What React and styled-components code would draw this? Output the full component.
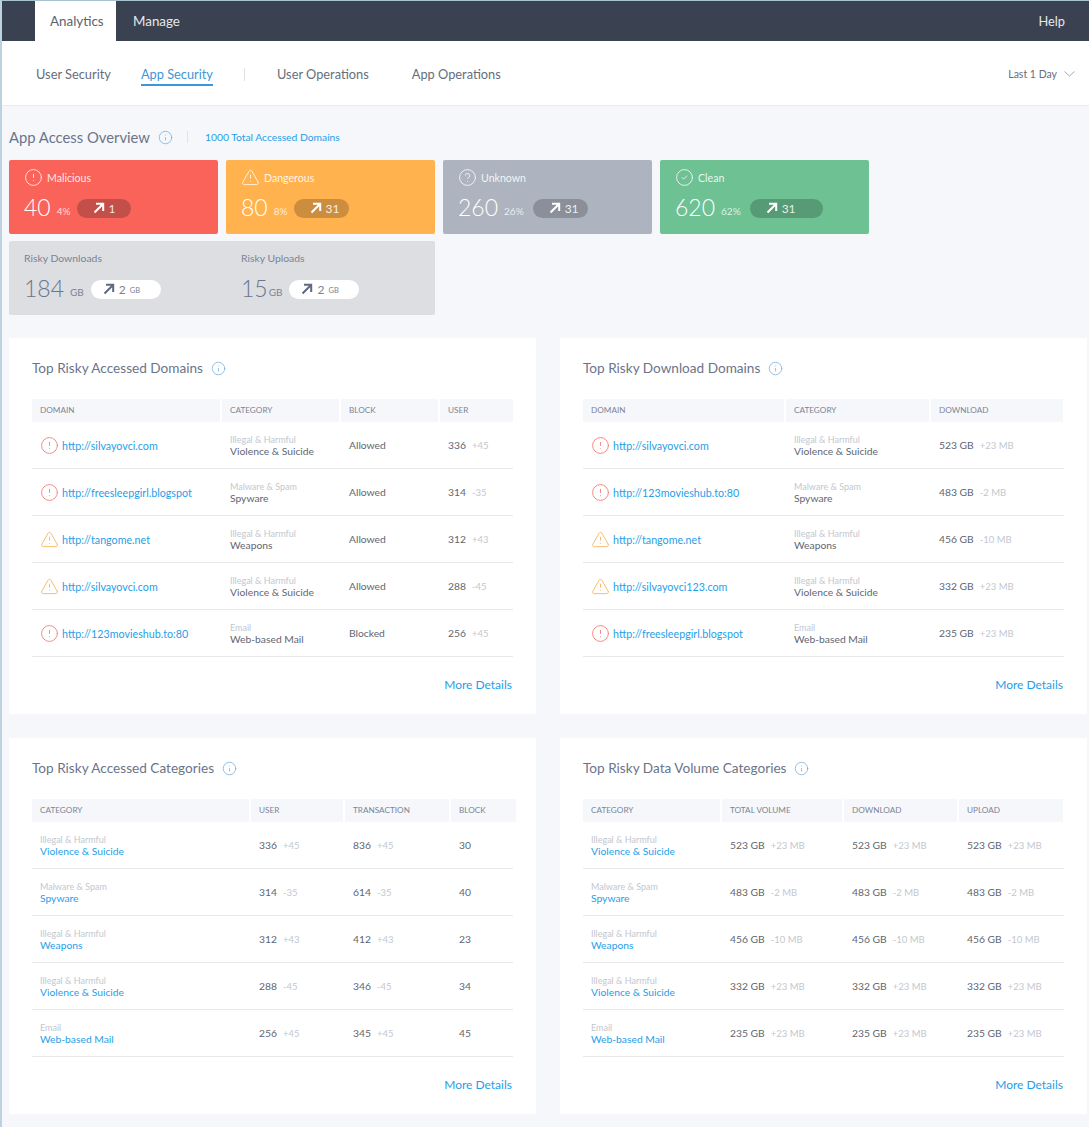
import React from "react";
import styled, { createGlobalStyle } from "styled-components";
import { AlertCircle, AlertTriangle, HelpCircle, CheckCircle2, Info } from "lucide-react";

const Global = createGlobalStyle`
  html, body { margin: 0; padding: 0; background: #f5f7fb; }
  body { font-family: "Lato", "Noto Sans", sans-serif; color: #5f6672; }
  * { box-sizing: border-box; }
`;

const Page = styled.div`
  border-left: 2px solid #bcd3df;
  border-top: 1px solid #a9c2d0;
  background: #f5f7fb;
  height: 1127px;
  overflow: hidden;
`;
const TopBar = styled.header`
  height: 40px;
  background: #3a4150;
  display: flex;
  align-items: stretch;
  padding: 0 24px 0 33px;
  font-size: 13.4px;
  color: #e6e8ec;
`;
const TopTab = styled.div`
  width: ${p => p.$w}px;
  padding-left: ${p => p.$pad}px;
  display: flex;
  align-items: center;
  background: ${p => (p.$active ? "#fff" : "transparent")};
  color: ${p => (p.$active ? "#5a6270" : "#e6e8ec")};
`;
const Help = styled.div`
  margin-left: auto;
  display: flex;
  align-items: center;
  font-size: 12.8px;
`;
const SubNav = styled.nav`
  height: 65px;
  background: #fff;
  border-bottom: 1px solid #e9ebf0;
  display: flex;
  align-items: center;
  padding: 2px 14px 0 34px;
  font-size: 12.8px;
  color: #666e7d;
`;
const SubItem = styled.div`
  margin-right: ${p => p.$mr}px;
  padding: 4px 0 2px;
  border-bottom: 2px solid ${p => (p.$active ? "#3d96d8" : "transparent")};
  color: ${p => (p.$active ? "#3d96d8" : "#666e7d")};
  white-space: nowrap;
`;
const SubDivider = styled.div`
  width: 1px;
  height: 13px;
  background: #dfe2e7;
  margin-right: 32px;
`;
const Range = styled.div`
  margin-left: auto;
  display: flex;
  align-items: center;
  gap: 7px;
  font-size: 10.5px;
  color: #666e7d;
`;
const Content = styled.main`
  padding: 0 0 0 7px;
`;
const OverviewHead = styled.div`
  height: 54px;
  display: flex;
  align-items: center;
  font-size: 14.8px;
  color: #6b7489;
  padding-top: 8px;
`;
const InfoIcon = styled(Info)`
  color: #68a6d8;
  margin-left: ${p => p.$ml}px;
  flex: none;
`;
const HeadDivider = styled.div`
  width: 1px;
  height: 12px;
  background: #dfe2e7;
  margin: 0 17px 0 14px;
`;
const TotalLink = styled.div`
  font-size: 10.3px;
  color: #1f9ee8;
`;
const Cards = styled.div`
  display: grid;
  grid-template-columns: repeat(4, 209px);
  gap: 7px 8px;
`;
const StatCard = styled.div`
  height: 74px;
  background: ${p => p.$bg};
  border-radius: 2px;
  padding: 9px 15px 0;
  color: #fff;
`;
const CardLabel = styled.div`
  display: flex;
  align-items: center;
  gap: 4px;
  height: 17px;
  font-size: 10.6px;
  color: rgba(255,255,255,.88);
`;
const CardValues = styled.div`
  display: flex;
  align-items: center;
  margin-top: 9px;
  height: 26px;
`;
const BigNum = styled.span`
  font-size: 23px;
  font-weight: 300;
  margin-top: -3px;
  color: ${p => p.$c || "#fff"};
`;
const Small = styled.span`
  font-size: 10px;
  margin-left: ${p => p.$ml}px;
  padding-top: 5px;
  color: ${p => p.$c || "rgba(255,255,255,.78)"};
`;
const Pill = styled.div`
  width: ${p => p.$w}px;
  height: 19px;
  margin-left: ${p => p.$ml}px;
  padding-left: ${p => p.$pl}px;
  border-radius: 10px;
  background: ${p => p.$bg};
  color: ${p => p.$c};
  display: flex;
  align-items: center;
  gap: 4px;
  font-size: 12px;
`;
const PillUnit = styled.span`
  font-size: 7.5px;
  padding-top: 2px;
`;
const VolumeCard = styled.div`
  grid-column: span 2;
  height: 74px;
  background: #dcdee2;
  border-radius: 2px;
  padding: 8px 15px 0;
  display: grid;
  grid-template-columns: 217px 1fr;
`;
const VolumeLabel = styled.div`
  height: 18px;
  font-size: 10.4px;
  line-height: 18px;
  color: #7a8294;
`;
const Panels = styled.div`
  display: grid;
  grid-template-columns: 527px 527px;
  gap: 24px;
  margin-top: 23px;
`;
const Panel = styled.section`
  height: 376px;
  background: #fff;
  padding: 20px 23px 0;
  display: flex;
  flex-direction: column;
`;
const PanelTitle = styled.h2`
  margin: 0;
  height: 20px;
  display: flex;
  align-items: center;
  font-size: 13.6px;
  font-weight: 400;
  color: #6b7489;
`;
const Table = styled.div`
  margin-top: 21px;
`;
const HeadRow = styled.div`
  display: grid;
  grid-template-columns: ${p => p.$cols};
  gap: 2px;
  height: 23px;
`;
const HeadCell = styled.div`
  background: #f5f7fb;
  padding: 0 0 1px 8px;
  display: flex;
  align-items: center;
  font-size: 8.2px;
  color: #7c8494;
`;
const BodyRow = styled.div`
  display: grid;
  grid-template-columns: ${p => p.$cols};
  gap: 2px;
  height: 47px;
  border-bottom: 1px solid #e6e8ec;
`;
const Cell = styled.div`
  padding-left: 8px;
  display: flex;
  align-items: center;
  font-size: 10.3px;
  color: #5f6672;
  white-space: nowrap;
  min-width: 0;
`;
const StackCell = styled.div`
  padding: 3px 0 0 8px;
  display: flex;
  flex-direction: column;
  justify-content: center;
  align-items: flex-start;
  white-space: nowrap;
`;
const DomainLink = styled.span`
  font-size: 10.7px;
  color: #1f9ee8;
  margin-left: 3px;
`;
const Group = styled.span`
  font-size: 9px;
  line-height: 10px;
  color: #c3c7cf;
`;
const Name = styled.span`
  font-size: 10.3px;
  line-height: 13px;
  color: ${p => (p.$link ? "#1f9ee8" : "#5f6672")};
`;
const Delta = styled.span`
  margin-left: 6px;
  font-size: 9.5px;
  color: #c3c7cf;
`;
const MoreRow = styled.div`
  margin-top: 20px;
  padding-right: 1px;
  display: flex;
  justify-content: flex-end;
  font-size: 12px;
  color: #1f9ee8;
`;

const Risk = ({ kind }) =>
  kind === "bad" ? (
    <AlertCircle size={19} strokeWidth={1.05} color="#f3736b" />
  ) : (
    <AlertTriangle size={19} strokeWidth={1.05} color="#f8ae4c" />
  );

const Arrow = ({ color }) => (
  <svg width="12" height="12" viewBox="0 0 12 12" fill="none" stroke={color} strokeWidth="2">
    <path d="M1.5 10.5 L10 2 M3 1.8 H10.2 V9" />
  </svg>
);

const Chevron = () => (
  <svg width="11" height="6" viewBox="0 0 11 6" fill="none" stroke="#9aa1ad" strokeWidth="0.9">
    <path d="M.5 .5 L5.5 5 L10.5 .5" />
  </svg>
);

const stats = [
  { label: "Malicious", num: "40", pct: "4%", delta: "1", bg: "#f9635a", pill: "#c24f48", w: 54, gap: 6, Icon: AlertCircle },
  { label: "Dangerous", num: "80", pct: "8%", delta: "31", bg: "#ffb24d", pill: "#cc8e3e", w: 55, gap: 6, Icon: AlertTriangle },
  { label: "Unknown", num: "260", pct: "26%", delta: "31", bg: "#adb3bf", pill: "#8b8f99", w: 55, gap: 9, Icon: HelpCircle },
  { label: "Clean", num: "620", pct: "62%", delta: "31", bg: "#6dc193", pill: "#579a76", w: 73, gap: 9, Icon: CheckCircle2 },
];

const cats = [
  ["Illegal & Harmful", "Violence & Suicide"],
  ["Malware & Spam", "Spyware"],
  ["Illegal & Harmful", "Weapons"],
  ["Illegal & Harmful", "Violence & Suicide"],
  ["Email", "Web-based Mail"],
];

const t1 = [
  ["bad", "http://silvayovci.com", "Allowed", "336", "+45"],
  ["bad", "http://freesleepgirl.blogspot", "Allowed", "314", "-35"],
  ["warn", "http://tangome.net", "Allowed", "312", "+43"],
  ["warn", "http://silvayovci.com", "Allowed", "288", "-45"],
  ["bad", "http://123movieshub.to:80", "Blocked", "256", "+45"],
];
const t2 = [
  ["bad", "http://silvayovci.com", "523 GB", "+23 MB"],
  ["bad", "http://123movieshub.to:80", "483 GB", "-2 MB"],
  ["warn", "http://tangome.net", "456 GB", "-10 MB"],
  ["warn", "http://silvayovci123.com", "332 GB", "+23 MB"],
  ["bad", "http://freesleepgirl.blogspot", "235 GB", "+23 MB"],
];
const t3 = [
  ["336", "+45", "836", "+45", "30"],
  ["314", "-35", "614", "-35", "40"],
  ["312", "+43", "412", "+43", "23"],
  ["288", "-45", "346", "-45", "34"],
  ["256", "+45", "345", "+45", "45"],
];
const t4 = [
  ["523 GB", "+23 MB"],
  ["483 GB", "-2 MB"],
  ["456 GB", "-10 MB"],
  ["332 GB", "+23 MB"],
  ["235 GB", "+23 MB"],
];

const Category = ({ c, link }) => (
  <StackCell>
    <Group>{c[0]}</Group>
    <Name $link={link}>{c[1]}</Name>
  </StackCell>
);
const Value = ({ v, d }) => (
  <Cell>
    {v}
    <Delta>{d}</Delta>
  </Cell>
);
const PanelBox = ({ title, head, headCols, cols, children }) => (
  <Panel>
    <PanelTitle>
      {title}
      <InfoIcon size={15} strokeWidth={1.1} $ml={8} />
    </PanelTitle>
    <Table>
      <HeadRow $cols={headCols || cols}>
        {head.map(h => (
          <HeadCell key={h}>{h}</HeadCell>
        ))}
      </HeadRow>
      {children}
    </Table>
    <MoreRow>More Details</MoreRow>
  </Panel>
);

export default function App() {
  const c1 = "188px 117px 97px 73px";
  const c2 = "201px 143px 132px";
  const c3 = "217px 92px 104px 62px";
  const c3h = "217px 92px 104px 65px";
  const c4 = "137px 120px 113px 104px";
  return (
    <Page>
      <Global />
      <TopBar>
        <TopTab $active $w={81} $pad={15}>Analytics</TopTab>
        <TopTab $w={81} $pad={17}>Manage</TopTab>
        <Help>Help</Help>
      </TopBar>
      <SubNav>
        <SubItem $mr={30}>User Security</SubItem>
        <SubItem $active $mr={31}>App Security</SubItem>
        <SubDivider />
        <SubItem $mr={43}>User Operations</SubItem>
        <SubItem $mr={0}>App Operations</SubItem>
        <Range>
          Last 1 Day
          <Chevron />
        </Range>
      </SubNav>
      <Content>
        <OverviewHead>
          App Access Overview
          <InfoIcon size={15} strokeWidth={1.1} $ml={8} />
          <HeadDivider />
          <TotalLink>1000 Total Accessed Domains</TotalLink>
        </OverviewHead>
        <Cards>
          {stats.map(s => (
            <StatCard key={s.label} $bg={s.bg}>
              <CardLabel>
                <s.Icon size={19} strokeWidth={1} color="#fff" />
                {s.label}
              </CardLabel>
              <CardValues>
                <BigNum>{s.num}</BigNum>
                <Small $ml={6}>{s.pct}</Small>
                <Pill $w={s.w} $ml={s.gap} $pl={16} $bg={s.pill} $c="rgba(255,255,255,.88)">
                  <Arrow color="#fff" />
                  {s.delta}
                </Pill>
              </CardValues>
            </StatCard>
          ))}
          <VolumeCard>
            <div>
              <VolumeLabel>Risky Downloads</VolumeLabel>
              <CardValues>
                <BigNum $c="#6b7489">184</BigNum>
                <Small $ml={6} $c="#7a8294">GB</Small>
                <Pill $w={70} $ml={7} $pl={12} $bg="#fff" $c="#7a8294">
                  <Arrow color="#5f6a80" />
                  2<PillUnit>GB</PillUnit>
                </Pill>
              </CardValues>
            </div>
            <div>
              <VolumeLabel>Risky Uploads</VolumeLabel>
              <CardValues>
                <BigNum $c="#6b7489">15</BigNum>
                <Small $ml={1} $c="#7a8294">GB</Small>
                <Pill $w={70} $ml={7} $pl={12} $bg="#fff" $c="#7a8294">
                  <Arrow color="#5f6a80" />
                  2<PillUnit>GB</PillUnit>
                </Pill>
              </CardValues>
            </div>
          </VolumeCard>
        </Cards>
        <Panels>
          <PanelBox title="Top Risky Accessed Domains" head={["DOMAIN", "CATEGORY", "BLOCK", "USER"]} cols={c1}>
            {t1.map((r, i) => (
              <BodyRow key={i} $cols={c1}>
                <Cell>
                  <Risk kind={r[0]} />
                  <DomainLink>{r[1]}</DomainLink>
                </Cell>
                <Category c={cats[i]} />
                <Cell>{r[2]}</Cell>
                <Value v={r[3]} d={r[4]} />
              </BodyRow>
            ))}
          </PanelBox>
          <PanelBox title="Top Risky Download Domains" head={["DOMAIN", "CATEGORY", "DOWNLOAD"]} cols={c2}>
            {t2.map((r, i) => (
              <BodyRow key={i} $cols={c2}>
                <Cell>
                  <Risk kind={r[0]} />
                  <DomainLink>{r[1]}</DomainLink>
                </Cell>
                <Category c={cats[i]} />
                <Value v={r[2]} d={r[3]} />
              </BodyRow>
            ))}
          </PanelBox>
          <PanelBox title="Top Risky Accessed Categories" head={["CATEGORY", "USER", "TRANSACTION", "BLOCK"]} cols={c3} headCols={c3h}>
            {t3.map((r, i) => (
              <BodyRow key={i} $cols={c3}>
                <Category c={cats[i]} link />
                <Value v={r[0]} d={r[1]} />
                <Value v={r[2]} d={r[3]} />
                <Cell>{r[4]}</Cell>
              </BodyRow>
            ))}
          </PanelBox>
          <PanelBox title="Top Risky Data Volume Categories" head={["CATEGORY", "TOTAL VOLUME", "DOWNLOAD", "UPLOAD"]} cols={c4}>
            {t4.map((r, i) => (
              <BodyRow key={i} $cols={c4}>
                <Category c={cats[i]} link />
                <Value v={r[0]} d={r[1]} />
                <Value v={r[0]} d={r[1]} />
                <Value v={r[0]} d={r[1]} />
              </BodyRow>
            ))}
          </PanelBox>
        </Panels>
      </Content>
    </Page>
  );
}
